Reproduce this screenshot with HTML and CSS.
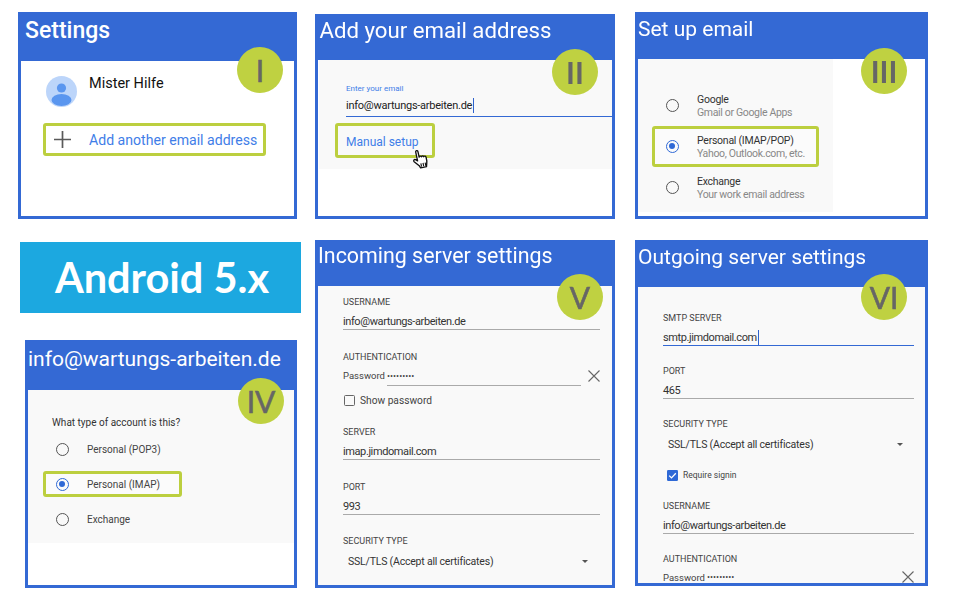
FILE: index.html
```html
<!DOCTYPE html>
<html lang="en">
<head>
<meta charset="utf-8">
<title>Android 5.x email setup</title>
<link rel="stylesheet" href="styles.css">
</head>
<body>
<main class="collage">
  <section class="col col-1">
    <article class="panel p1">
      <header class="bar"><h2 class="title">Settings</h2></header>
      <div class="body">
        <div class="account">
          <svg class="avatar" viewBox="0 0 31 31"><circle cx="15.5" cy="15.5" r="15.5" fill="#bcd5fa"/><circle cx="15.5" cy="12" r="4.6" fill="#5a96ef"/><ellipse cx="15.5" cy="24" rx="10" ry="6" fill="#5a96ef"/></svg>
          <span class="account-name">Mister Hilfe</span>
        </div>
        <div class="hl add-row">
          <svg class="plus" viewBox="0 0 17 17"><path d="M8.5 0v17M0 8.5h17" stroke="#5a5a5a" stroke-width="1.7" fill="none"/></svg>
          <span class="link add-text">Add another email address</span>
        </div>
      </div>
      <span class="badge">I</span>
    </article>

    <div class="banner">Android 5.x</div>

    <article class="panel p4">
      <header class="bar"><h2 class="title">info@wartungs-arbeiten.de</h2></header>
      <div class="body">
        <div class="gray">
          <p class="question">What type of account is this?</p>
          <div class="opt"><span class="radio"></span><span class="opt-text">Personal (POP3)</span></div>
          <div class="hl opt opt-on"><span class="radio on"></span><span class="opt-text">Personal (IMAP)</span></div>
          <div class="opt"><span class="radio"></span><span class="opt-text">Exchange</span></div>
        </div>
      </div>
      <span class="badge">IV</span>
    </article>
  </section>

  <section class="col col-2">
    <article class="panel p2">
      <header class="bar"><h2 class="title">Add your email address</h2></header>
      <div class="body">
        <div class="gray">
          <div class="email-label">Enter your email</div>
          <div class="email-value"><span class="caret">info@wartungs-arbeiten.de</span></div>
          <div class="hl manual"><span class="link manual-text">Manual setup</span></div>
        </div>
      </div>
      <svg class="hand" viewBox="0 0 18 22"><path d="M5.2 2.2c0-1.6 2.4-1.6 2.4 0v6c.2-1.2 2.3-1.2 2.4.2.2-1 2.2-1 2.4.4.3-.8 2.2-.7 2.3.8.1 2.4.2 4.300-.6 6.400l-1 3.500H6.800L5.800 17 1.500 11.800c-1-1.300.6-2.800 1.900-1.800l1.800 1.700z" fill="#fff" stroke="#111" stroke-width="1.400" stroke-linejoin="round"/><path d="M8 15v3.500M10.300 15v3.500M12.600 15v3.500" stroke="#111" stroke-width="1.200"/></svg>
      <span class="badge">II</span>
    </article>

    <article class="panel p5">
      <header class="bar"><h2 class="title">Incoming server settings</h2></header>
      <div class="body">
        <div class="gray form">
          <div class="field">
            <div class="label">USERNAME</div>
            <div class="value">info@wartungs-arbeiten.de</div>
          </div>
          <div class="field">
            <div class="label">AUTHENTICATION</div>
            <div class="pw">
              <span class="pw-label">Password</span>
              <span class="pw-dots">•••••••••</span>
              <svg class="x" viewBox="0 0 12 12"><path d="M.5.500l11 11M11.500.500l-11 11" stroke="#666" stroke-width="1.100" fill="none"/></svg>
            </div>
          </div>
          <div class="show"><span class="check"></span><span class="show-text">Show password</span></div>
          <div class="field">
            <div class="label">SERVER</div>
            <div class="value">imap.jimdomail.com</div>
          </div>
          <div class="field">
            <div class="label">PORT</div>
            <div class="value">993</div>
          </div>
          <div class="field">
            <div class="label">SECURITY TYPE</div>
            <div class="select"><span>SSL/TLS (Accept all certificates)</span><i class="arrow"></i></div>
          </div>
        </div>
      </div>
      <span class="badge">V</span>
    </article>
  </section>

  <section class="col col-3">
    <article class="panel p3">
      <header class="bar"><h2 class="title">Set up email</h2></header>
      <div class="body">
        <div class="gray">
          <div class="choice"><span class="radio"></span><div class="c-text"><div class="c-main">Google</div><div class="c-sub">Gmail or Google Apps</div></div></div>
          <div class="hl choice choice-on"><span class="radio on"></span><div class="c-text"><div class="c-main">Personal (IMAP/POP)</div><div class="c-sub">Yahoo, Outlook.com, etc.</div></div></div>
          <div class="choice"><span class="radio"></span><div class="c-text"><div class="c-main">Exchange</div><div class="c-sub">Your work email address</div></div></div>
        </div>
      </div>
      <span class="badge">III</span>
    </article>

    <article class="panel p6">
      <header class="bar"><h2 class="title">Outgoing server settings</h2></header>
      <div class="body">
        <div class="gray form">
          <div class="field">
            <div class="label">SMTP SERVER</div>
            <div class="value active"><span class="caret">smtp.jimdomail.com</span></div>
          </div>
          <div class="field">
            <div class="label">PORT</div>
            <div class="value">465</div>
          </div>
          <div class="field">
            <div class="label">SECURITY TYPE</div>
            <div class="select"><span>SSL/TLS (Accept all certificates)</span><i class="arrow"></i></div>
          </div>
          <div class="signin">
            <svg class="checked" viewBox="0 0 11 11"><rect width="11" height="11" rx="1.200" fill="#2f69d6"/><path d="M2.200 5.600l2.300 2.300 4.300-4.600" stroke="#fff" stroke-width="1.300" fill="none"/></svg>
            <span class="signin-text">Require signin</span>
          </div>
          <div class="field">
            <div class="label">USERNAME</div>
            <div class="value">info@wartungs-arbeiten.de</div>
          </div>
          <div class="field">
            <div class="label">AUTHENTICATION</div>
            <div class="pw">
              <span class="pw-label">Password</span>
              <span class="pw-dots">•••••••••</span>
              <svg class="x" viewBox="0 0 12 12"><path d="M.5.500l11 11M11.500.500l-11 11" stroke="#666" stroke-width="1.100" fill="none"/></svg>
            </div>
          </div>
        </div>
      </div>
      <span class="badge">VI</span>
    </article>
  </section>
</main>
</body>
</html>
```

FILE: styles.css
```css
* { box-sizing: border-box; }
html, body { margin: 0; padding: 0; background: #fff; }
body { width: 960px; height: 594px; overflow: hidden; font-family: Roboto, "Liberation Sans", sans-serif; color: #333; }
h2, p { margin: 0; }

.collage { display: flex; align-items: flex-start; height: 594px; filter: blur(0.3px); }
.col { display: flex; flex-direction: column; }
.col-1 { width: 283px; margin-left: 18px; }
.col-2 { width: 300px; margin-left: 14px; }
.col-3 { width: 293px; margin-left: 20px; }

/* panels */
.panel { position: relative; display: flex; flex-direction: column; flex: none; border: 3px solid #3469d4; background: #3469d4; overflow: hidden; }
.p1 { width: 279px; height: 207px; margin-top: 12px; }
.p2 { width: 300px; height: 205px; margin-top: 14px; }
.p3 { width: 293px; height: 207px; margin-top: 12px; }
.p4 { width: 272px; height: 248px; margin-top: 27px; margin-left: 7px; }
.p5 { width: 300px; height: 348px; margin-top: 21px; }
.p6 { width: 293px; height: 346px; margin-top: 21px; }

.bar { flex: none; display: flex; align-items: center; }
.p1 .bar { height: 46px; padding: 0 0 15px 4px; }
.p2 .bar { height: 43px; padding: 0 0 17px 1.500px; }
.p3 .bar { height: 44px; padding: 0 0 17px 0; }
.p4 .bar { height: 47px; padding: 0 0 16px 0; }
.p5 .bar { height: 43px; padding: 0 0 17px 0; }
.p6 .bar { height: 44px; padding: 0 0 16px 0; }

.title { font-size: 21px; font-weight: 400; color: #fff; white-space: nowrap; line-height: 26px; }
.p1 .title { font-size: 23px; font-weight: 500; }
.p2 .title { font-size: 22.200px; }
.p5 .title { font-size: 21.400px; }

.body { flex: 1; min-height: 0; background: #fff; overflow: hidden; }
.gray { background: #f9f9f9; }

/* badge */
.badge { position: absolute; width: 46px; height: 46px; border-radius: 50%; background: #bfd141; color: #666; display: flex; align-items: center; justify-content: center; font-family: Lato, sans-serif; font-weight: 400; -webkit-text-stroke: 0.6px #666; font-size: 30px; line-height: 1; }
.p1 .badge { left: 216px; top: 32px; }
.p2 .badge { left: 234px; top: 32px; font-weight: 700; -webkit-text-stroke: 0; }
.p3 .badge { left: 223px; top: 33px; font-weight: 700; -webkit-text-stroke: 0; }
.p4 .badge { left: 210px; top: 35px; }
.p5 .badge { left: 239px; top: 31px; }
.p6 .badge { left: 223px; top: 31px; }

/* highlight */
.hl { border: 3px solid #bccf3f; border-radius: 3px; background: #fff; }
.link { color: #3f7ee8; }

/* panel I */
.p1 .body { padding: 0 0 0 22px; }
.account { display: flex; align-items: flex-start; padding: 15px 0 0 3px; height: 62px; }
.avatar { width: 31px; height: 31px; flex: none; }
.account-name { margin: -1px 0 0 12px; font-size: 14.500px; line-height: 17px; color: #111; }
.add-row { width: 223px; height: 33px; display: flex; align-items: center; padding-left: 8px; }
.plus { width: 17px; height: 17px; flex: none; }
.add-text { margin: 1px 0 0 18px; font-size: 14.100px; white-space: nowrap; }

/* banner */
.banner { flex: none; width: 281px; height: 71px; margin: 23px 0 0 2px; padding-left: 3px; background: #1ca8e0; color: #fff; display: flex; align-items: center; justify-content: center; font-family: Lato, sans-serif; font-weight: 700; font-size: 41.500px; line-height: 1; }

/* panel II */
.p2 .body { position: relative; }
.p2 .gray { height: 109px; margin-left: 1px; padding: 23px 0 0 27px; }
.email-label { font-size: 8px; line-height: 11px; color: #3f7ee8; }
.email-value { height: 20px; margin-top: 3px; font-size: 11px; letter-spacing: -0.25px; line-height: 18px; color: #222; border-bottom: 1.500px solid #3469d4; }
.caret { border-right: 1px solid #2f62cc; padding-right: 1px; display: inline-block; line-height: 15px; }
.manual { width: 100px; height: 35px; margin: 6px 0 0 -11px; display: flex; align-items: center; padding-left: 8px; background: #f9f9f9; }
.manual-text { margin-top: 2px; font-size: 12px; white-space: nowrap; }
.hand { position: absolute; left: 94px; top: 132px; width: 18px; height: 21px; transform: rotate(-12deg); }

/* panel III */
.p3 .gray { width: 195px; height: 153px; padding-top: 32px; }
.choice { display: flex; align-items: center; height: 28px; padding-left: 28px; gap: 18px; margin-bottom: 7px; }
.choice-on { width: 167px; height: 41px; margin: 0 0 6px 14px; padding-left: 11px; background: #fbfbfb; }
.c-text { padding-top: 2px; }
.c-main { font-size: 10.500px; letter-spacing: -0.25px; line-height: 13px; color: #333; white-space: nowrap; }
.c-sub { font-size: 10.500px; letter-spacing: -0.33px; line-height: 14px; color: #888; white-space: nowrap; }

.radio { flex: none; display: block; position: relative; width: 13px; height: 13px; border: 1.300px solid #555; border-radius: 50%; }
.radio.on { border-color: #2f69d6; }
.radio.on::after { content: ""; position: absolute; left: 2px; top: 2px; width: 6.400px; height: 6.400px; border-radius: 50%; background: #2f69d6; }

/* panel IV */
.p4 .gray { height: 153px; padding: 26px 0 0 24px; }
.question { font-size: 10px; line-height: 13px; color: #333; }
.opt { display: flex; align-items: center; height: 26px; gap: 18px; padding-left: 4px; margin-top: 9px; }
.opt:first-of-type { margin-top: 7px; }
.opt-text { font-size: 10px; color: #444; white-space: nowrap; }
.opt-on { width: 139px; margin-left: -9px; padding-left: 10px; background: #fbfbfb; }

/* forms */
.p5 .form { height: 100%; padding: 10px 12px 0 25px; }
.p6 .form { height: 100%; padding: 25px 11px 0 25px; }
.field { margin-bottom: 20.500px; }
.p6 .field { margin-bottom: 19px; }
.label { font-size: 9px; line-height: 12px; color: #444; white-space: nowrap; }
.value { height: 17px; margin-top: 5px; font-size: 11px; letter-spacing: -0.4px; line-height: 18px; color: #333; border-bottom: 1px solid #aaa; white-space: nowrap; }
.value.active { border-bottom: 1.500px solid #3469d4; }
.pw { display: flex; align-items: flex-start; margin-top: 6px; height: 17px; }
.p6 .pw { margin-top: 5px; }
.pw-label { font-size: 9.500px; line-height: 14px; color: #444; width: 44px; flex: none; }
.p6 .pw-label { line-height: 16px; }
.pw-dots { flex: 1; font-size: 9px; line-height: 14px; color: #444; border-bottom: 1px solid #aaa; height: 17px; margin-right: 7px; }
.x { flex: none; width: 12px; height: 12px; margin: 1px 0 0 0; }
.show { display: flex; align-items: center; height: 16px; margin: -14px 0 18px 1px; gap: 5px; }
.check { flex: none; width: 11px; height: 11px; border: 1.200px solid #666; border-radius: 1.500px; }
.show-text { font-size: 10.200px; color: #444; }
.select { display: flex; justify-content: space-between; align-items: center; height: 16px; margin-top: 6px; padding: 0 12px 0 5px; font-size: 10.500px; letter-spacing: -0.2px; color: #333; white-space: nowrap; }
.p6 .select { padding-right: 11px; }
.arrow { display: block; width: 0; height: 0; border-left: 3px solid transparent; border-right: 3px solid transparent; border-top: 3px solid #555; }
.signin { display: flex; align-items: center; height: 12px; margin: -2px 0 19px 4px; gap: 5px; }
.checked { flex: none; width: 11px; height: 11px; }
.signin-text { font-size: 8.500px; color: #444; }
.p6 .pw-dots { border-bottom: none; margin-right: 6px; }
```
